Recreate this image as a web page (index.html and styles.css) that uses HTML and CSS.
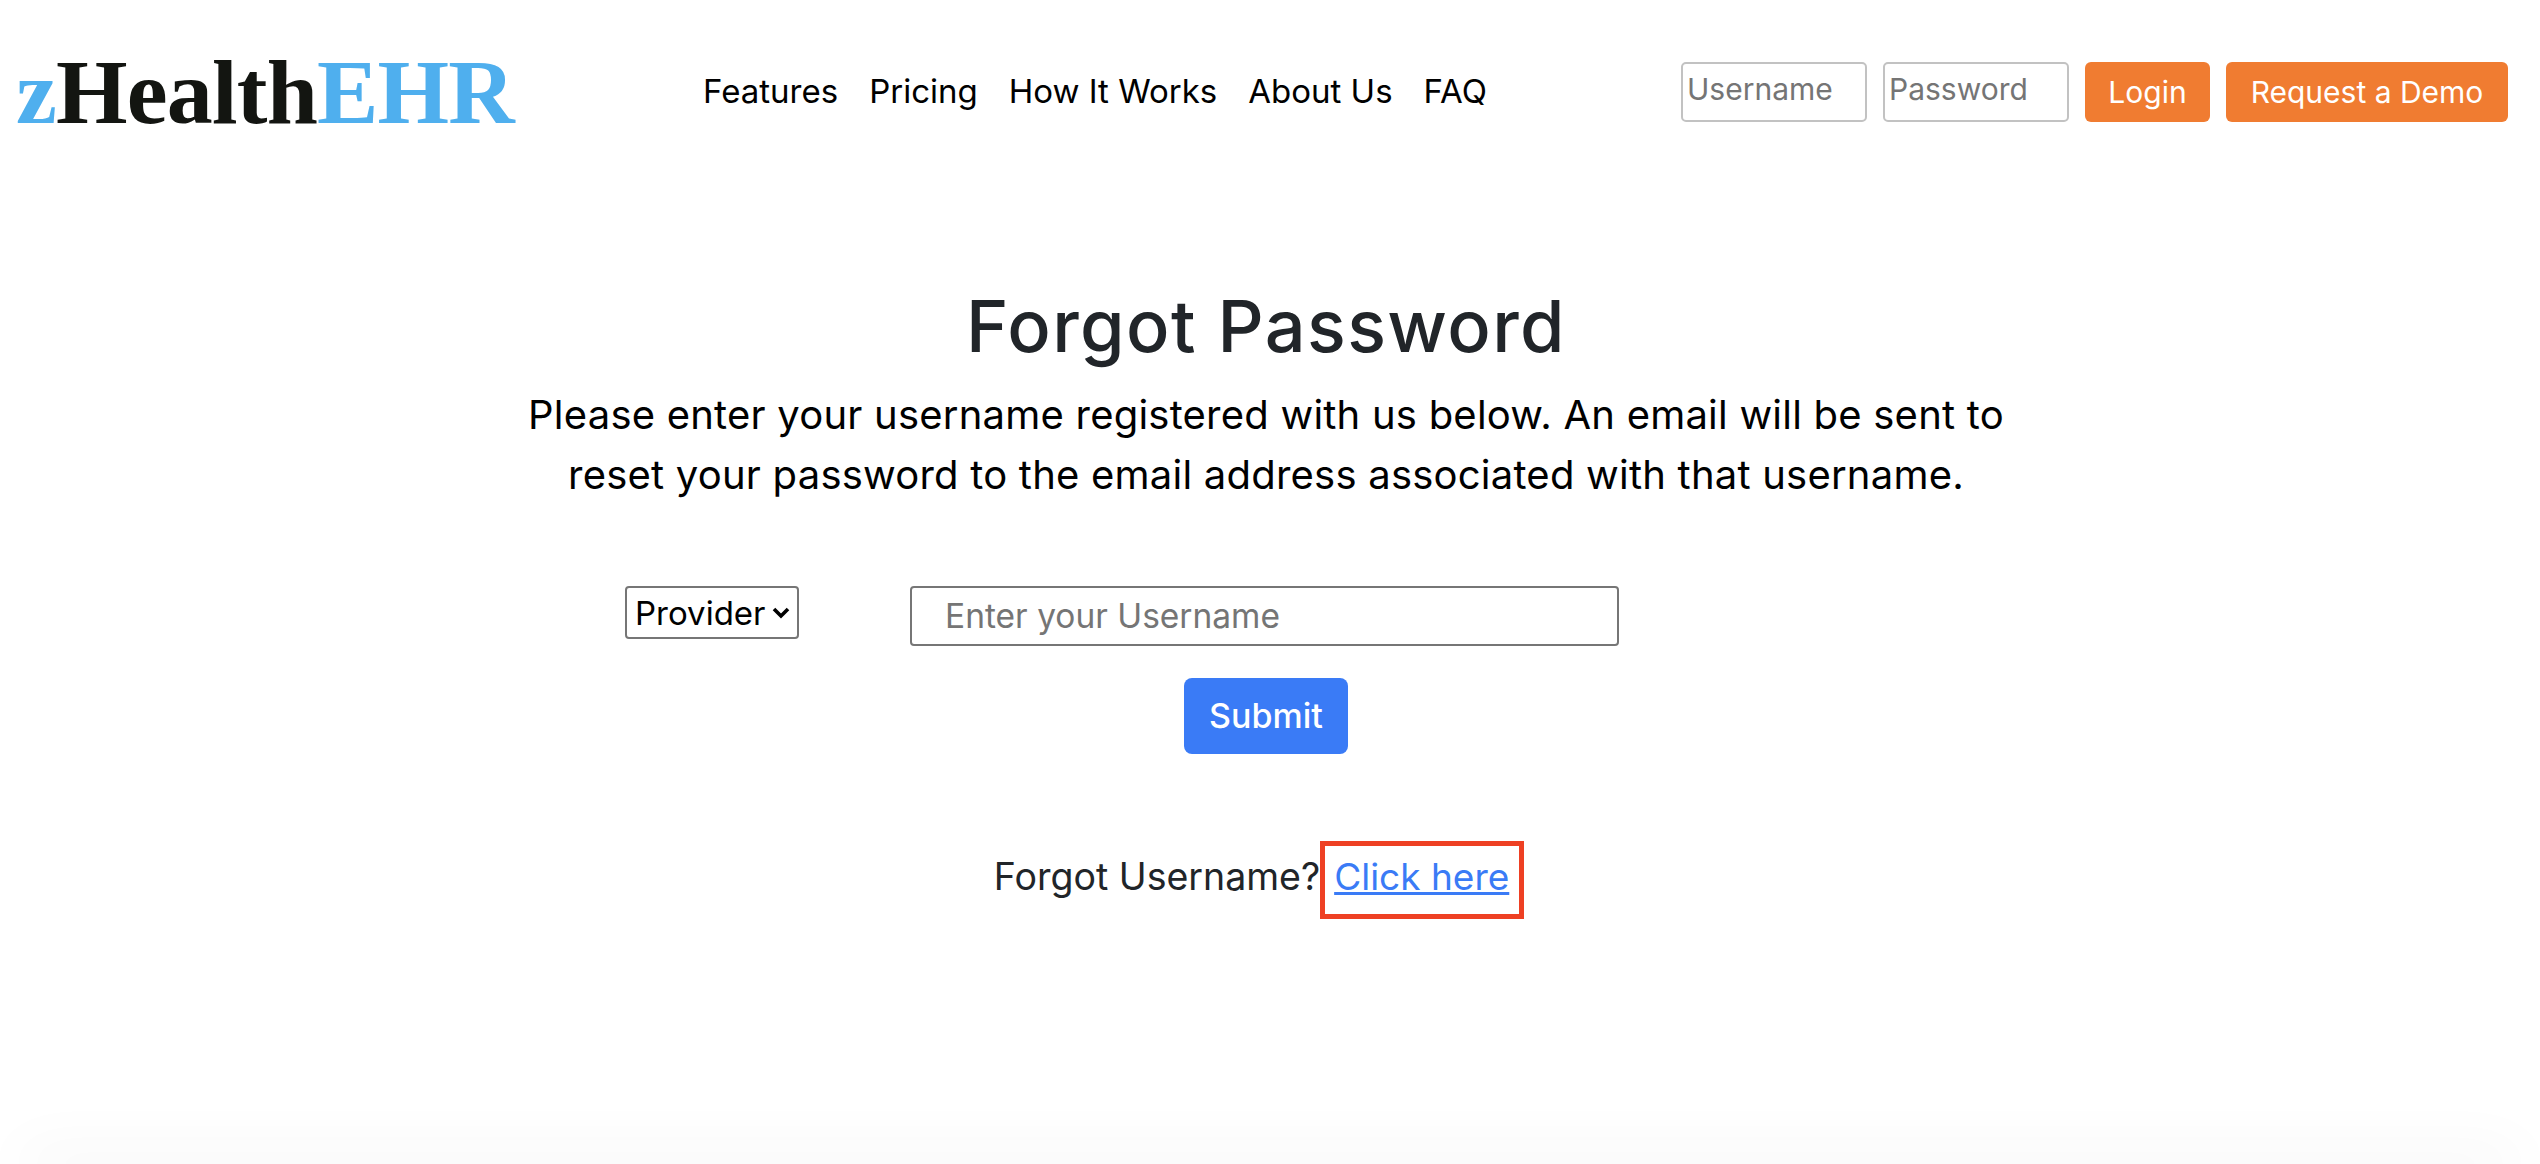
FILE: index.html
```html
<!DOCTYPE html>
<html lang="en">
  <head>
    <meta charset="UTF-8" />
    <meta name="viewport" content="width=device-width, initial-scale=1.0" />
    <title>zHealthEHR</title>
    <link rel="stylesheet" href="styles.css">
  </head>
  <body>
    <header>
      <a class="logo" href="#"><span class="blue">z</span>Health<span class="blue">EHR</span></a>
      <nav>
        <a href="#">Features</a>
        <a href="#">Pricing</a>
        <a href="#">How It Works</a>
        <a href="#">About Us</a>
        <a href="#">FAQ</a>
      </nav>
      <form class="login">
        <input type="text" placeholder="Username" />
        <input type="password" placeholder="Password" />
        <button type="button" class="orange login-btn">Login</button>
        <button type="button" class="orange demo-btn">Request a Demo</button>
      </form>
    </header>

    <main>
      <h1>Forgot Password</h1>
      <p class="intro">
        Please enter your username registered with us below. An email will be sent to<br />
        reset your password to the email address associated with that username.
      </p>
      <div class="reset-row">
        <select>
          <option>Provider</option>
          <option>Patient</option>
        </select>
        <input type="text" placeholder="Enter your Username" />
      </div>
      <button type="button" class="submit">Submit</button>
      <div class="forgot">
        <span>Forgot Username?</span>
        <span class="marked"><a href="#">Click here</a></span>
      </div>
    </main>

    <div class="page-end"></div>
  </body>
</html>
```

FILE: styles.css
```css
* {
  box-sizing: border-box;
}

html,
body {
  height: 100%;
}

body {
  margin: 0;
  height: 1164px;
  overflow: hidden;
  display: flex;
  flex-direction: column;
  background-color: #fff;
  font-family: Inter, "Noto Sans", sans-serif;
  color: #000;
}

header {
  display: flex;
  align-items: center;
  height: 122px;
  padding: 62px 32px 0 16px;
}

.logo {
  width: 687px;
  font-family: "Liberation Serif", serif;
  font-weight: bold;
  font-size: 92px;
  letter-spacing: -0.8px;
  line-height: 60px;
  color: #131511;
  text-decoration: none;
}

.blue {
  color: #4fafee;
}

nav {
  display: flex;
  gap: 31px;
  padding-bottom: 3px;
}

nav a {
  font-size: 33px;
  color: #000;
  text-decoration: none;
}

.login {
  display: flex;
  gap: 16px;
  margin-left: auto;
}

.login input {
  width: 186px;
  height: 60px;
  padding: 0 4px 6px;
  border: 2px solid #c2c2c2;
  border-radius: 5px;
  font: 30px Inter, sans-serif;
}

.orange {
  height: 60px;
  border: 0;
  border-radius: 6px;
  background-color: #f07c31;
  color: #fff;
  font: 30px Inter, sans-serif;
}

.login-btn {
  width: 125px;
}

.demo-btn {
  width: 282px;
}

main {
  flex: 1;
  display: flex;
  flex-direction: column;
  align-items: center;
  padding: 161px 8px 0 0;
}

h1 {
  margin: 0 0 16px;
  font-size: 72px;
  line-height: 86px;
  font-weight: 500;
  letter-spacing: 1.4px;
  color: #212529;
}

.intro {
  margin: 0;
  font-size: 40px;
  letter-spacing: 0.22px;
  line-height: 60px;
  text-align: center;
}

.reset-row {
  display: flex;
  align-items: flex-start;
  gap: 111px;
  width: 994px;
  margin: 81px 0 0 625px;
  align-self: flex-start;
}

select {
  width: 174px;
  height: 53px;
  padding: 0 0 0 8px;
  border: 2px solid #767676;
  border-radius: 4px;
  appearance: none;
  background: #fff url("data:image/svg+xml,%3Csvg xmlns='http://www.w3.org/2000/svg' width='18' height='12' viewBox='0 0 18 12'%3E%3Cpath d='M2 2l7 7 7-7' fill='none' stroke='%23000' stroke-width='3.6'/%3E%3C/svg%3E") no-repeat right 7px center;
  font: 33px Inter, sans-serif;
  color: #000;
}

.reset-row input {
  width: 709px;
  height: 60px;
  padding: 0 33px;
  border: 2px solid #767676;
  border-radius: 4px;
  font: 33.5px Inter, sans-serif;
}

.submit {
  width: 164px;
  height: 76px;
  margin-top: 32px;
  padding-bottom: 3px;
  border: 0;
  border-radius: 8px;
  background-color: #3a7bf6;
  color: #fff;
  font: 500 34px Inter, sans-serif;
}

.forgot {
  display: flex;
  align-items: center;
  margin: 87px 14px 0 0;
  font-size: 37.5px;
  line-height: 64px;
  color: #212529;
}

.forgot > span:first-child {
  padding-bottom: 6px;
}

.marked {
  width: 204px;
  height: 78px;
  padding-left: 9px;
  border: 5px solid #ee4023;
  font-size: 37px;
  line-height: 62px;
}

.marked a {
  color: #3a7bf6;
}

.page-end {
  height: 0;
  margin: 0 30px;
  box-shadow: 0 0 60px 8px rgba(0, 0, 0, 0.08);
}
```
